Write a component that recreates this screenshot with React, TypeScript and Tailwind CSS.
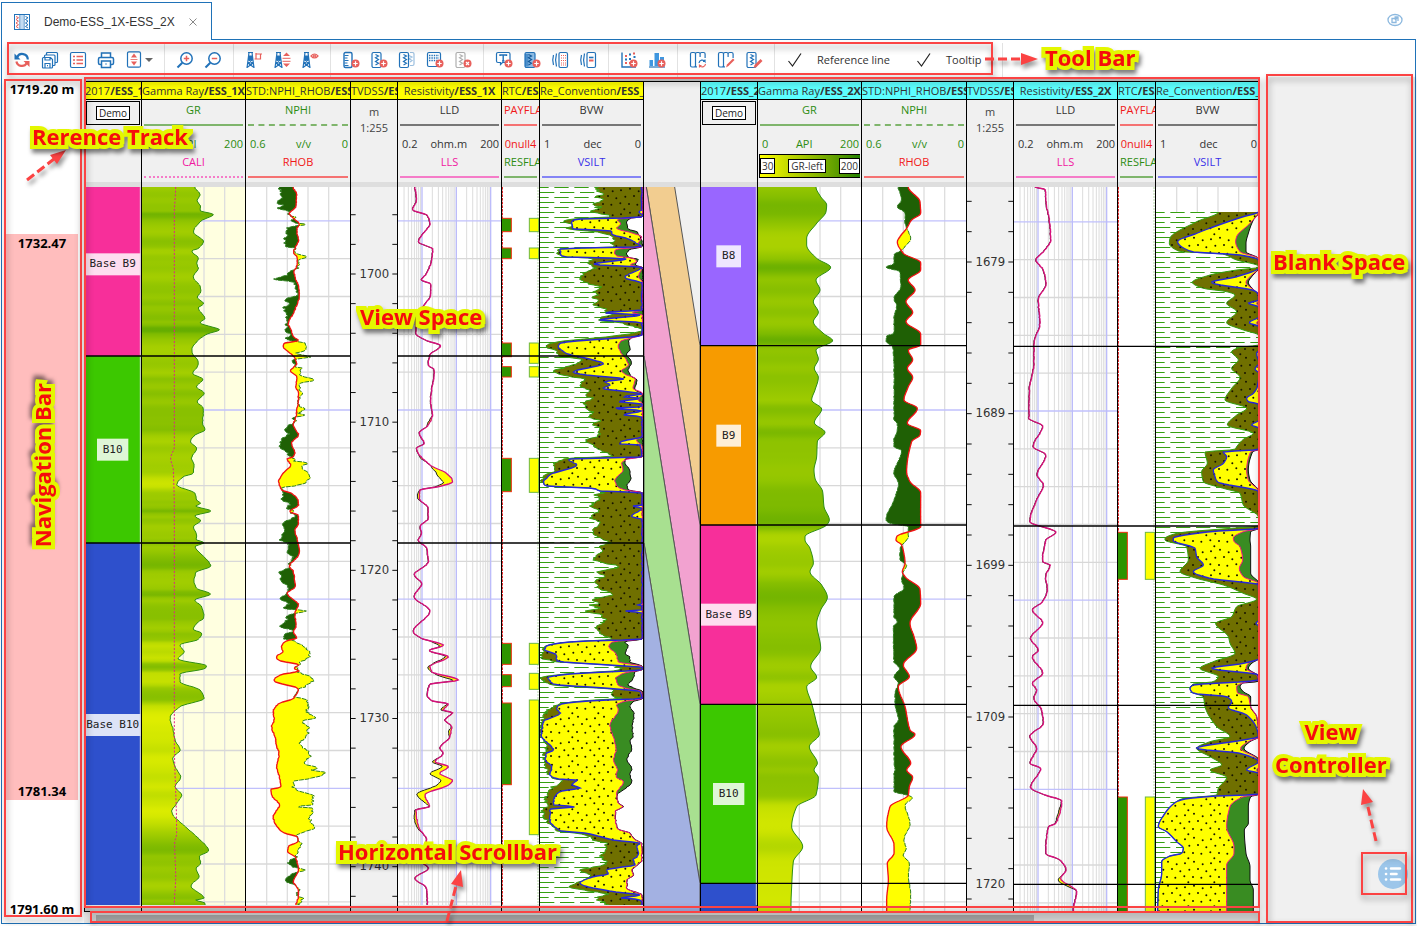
import React from "react";

/* ------------------------------------------------------------------ */
/* Curve samples: flat x, y lists on a grid of three units per pixel.  */
/* The lower half of every log is stored with its own depth origin.    */
/* ------------------------------------------------------------------ */

type Pt = [number, number];
const LOWER = 1080;
const TOP = 21;
const BASE = 2193;
const CHART_H = 724;

function curve(upper: number[], lower: number[] = []): Pt[] {
  const out: Pt[] = [];
  for (let i = 0; i < upper.length; i += 2) out.push([upper[i], upper[i + 1]]);
  for (let i = 0; i < lower.length; i += 2) out.push([lower[i], lower[i + 1] + LOWER]);
  return out.sort((a, b) => a[1] - b[1]);
}

function noise(n: number): number {
  const s = Math.sin(n * 12.9898) * 43758.5453;
  return (s - Math.floor(s)) * 2 - 1;
}

/* Monotone cubic resampling of a curve over depth. */
function resample(pts: Pt[], from: number, to: number, jitter = 0, step = 3): Pt[] {
  const n = pts.length;
  const sec: number[] = [];
  for (let i = 0; i < n - 1; i++) {
    sec.push((pts[i + 1][0] - pts[i][0]) / Math.max(1, pts[i + 1][1] - pts[i][1]));
  }
  const tan = pts.map((_, i) => {
    if (i === 0 || i === n - 1) return 0;
    const a = sec[i - 1];
    const b = sec[i];
    return a * b <= 0 ? 0 : (2 * a * b) / (a + b);
  });
  const out: Pt[] = [];
  let k = 0;
  for (let y = from; y <= to; y += step) {
    while (k < n - 2 && pts[k + 1][1] < y) k++;
    const [x0, y0] = pts[k];
    const [x1, y1] = pts[k + 1];
    const h = Math.max(1, y1 - y0);
    const t = Math.min(1, Math.max(0, (y - y0) / h));
    const t2 = t * t;
    const t3 = t2 * t;
    const x =
      (2 * t3 - 3 * t2 + 1) * x0 +
      (t3 - 2 * t2 + t) * h * tan[k] +
      (-2 * t3 + 3 * t2) * x1 +
      (t3 - t2) * h * tan[k + 1];
    out.push([x + jitter * noise(y), y]);
  }
  return out;
}

const line = (p: Pt[]) => "M" + p.map(([x, y]) => `${x.toFixed(1)} ${y.toFixed(1)}`).join("L");
const toEdge = (p: Pt[], edge: number) =>
  `${line(p)}L${edge} ${p[p.length - 1][1]}L${edge} ${p[0][1]}Z`;
const between = (a: Pt[], b: Pt[]) => `${line(a)}L${line([...b].reverse()).slice(1)}Z`;

const GR1 = curve(
  [345,21,360,45,352,62,362,80,360,92,400,103,365,122,340,155,370,185,355,205,335,213,355,235,350,250,355,265,340,290,360,320,362,335,352,352,370,370,355,385,365,400,375,415,360,428,385,438,418,449,380,463,350,485,335,510,340,525,355,545,352,560,338,580,368,598,350,620,372,640,352,665,370,685,368,730,375,750,345,765,332,785,350,805,335,835,342,855,340,880,310,890,290,915,345,940,350,960,362,970,348,978,393,993,345,1008,362,1022,340,1040,350,1065,348,1078],
  [372,8,345,20,372,50,392,78,348,97,342,125,350,145,392,162,345,180,365,200,372,232,350,250,340,268,365,280,355,298,300,315,312,335,295,357,380,378,375,385,300,402,300,425,360,450,372,475,300,500,270,535,280,570,285,600,300,630,278,655,285,680,302,712,285,740,305,765,290,790,275,815,310,855,350,890,385,932,358,950,362,970,348,985,357,1010,333,1037,372,1075,348,1080,375,1090]
);
const CALI1 = curve([287,21,283,100,283,800,272,835,280,870,283,1000], [283,600,290,880,284,910,287,1010,283,1095]);
const GR2 = curve(
  [378,21,392,50,410,75,408,95,380,130,350,175,350,195,380,235,422,262,378,300,390,330,370,365,385,397,370,425,400,460,428,482,378,510,385,537,373,565,385,592,375,630,365,660,395,687,373,728,405,757,382,785,380,830,372,870,375,895,398,935,402,980,418,1020,410,1035,345,1070],
  [345,0,360,25,370,70,360,95,395,135,412,172,392,210,380,250,392,325,362,380,380,412,350,440,365,490,380,550,388,583,358,620,382,670,372,690,385,712,378,765,320,800,305,860,338,920,310,965,305,1040,303,1095,303,1115]
);
const RHOB1 = curve(
  [640,21,650,45,648,80,628,100,640,115,657,130,650,150,655,180,645,205,640,215,652,235,650,260,642,275,645,290,655,320,658,350,650,375,640,400,625,430,635,455,640,470,655,482,612,490,610,500,640,528,650,550,632,573,650,590,648,620,655,640,655,670,650,690,648,710,640,735,655,765,635,790,645,820,640,830,622,838,632,855,610,880,596,905,605,930,635,940,655,965,655,975,630,995,655,1005,655,1030,645,1050],
  [652,0,658,40,628,80,640,95,645,140,622,160,655,195,645,220,648,260,640,275,650,295,620,302,605,320,608,335,590,350,595,360,655,375,642,385,655,393,600,405,582,422,655,447,640,475,595,492,580,515,582,540,575,560,585,590,590,620,597,640,590,680,598,710,602,742,573,747,575,765,598,795,580,830,585,850,610,878,650,890,655,903,625,920,622,935,645,950,652,970,655,990,640,1025,655,1050,655,1070,648,1095]
);
const NPHI1 = curve(
  [600,21,600,45,610,50,592,70,612,76,595,85,625,95,628,108,650,112,635,118,650,130,680,133,630,140,615,155,625,165,612,175,620,200,645,205,640,215,655,222,680,232,655,240,655,262,630,275,620,285,585,298,640,306,645,330,655,345,615,358,625,370,612,385,620,410,620,440,612,450,635,465,615,475,640,484,670,488,680,500,665,515,650,520,690,530,640,540,645,560,665,565,660,585,700,600,655,612,665,625,655,630,665,640,655,660,660,680,678,685,655,700,670,705,640,715,648,725,620,740,615,750,625,760,610,775,600,800,625,820,630,830,650,838,640,842,685,849,665,858,690,885,680,905,640,918,605,922,610,940,605,960,630,970,620,985,645,992,635,1000,650,1003,605,1035,615,1050],
  [600,0,625,10,620,35,640,50,630,65,628,80,600,95,605,125,625,145,622,160,600,175,625,190,612,205,680,213,625,225,620,240,600,260,640,272,610,285,615,297,640,302,665,315,680,325,690,350,665,365,650,385,655,395,700,417,675,440,655,450,645,470,680,480,685,500,680,515,705,532,665,545,685,560,685,580,660,610,690,645,670,670,715,685,690,690,738,697,680,718,640,722,640,740,650,750,700,768,695,795,635,800,700,803,690,835,700,865,660,880,650,890,665,915,650,930,650,950,625,965,635,980,675,990,640,1000,615,1020,640,1035,660,1045,650,1065,668,1075,655,1095]
);
const RHOB2 = curve(
  [655,21,690,65,692,100,665,120,650,145,630,170,622,185,640,220,692,248,692,270,655,300,675,330,648,365,668,397,648,425,692,462,692,495,655,510,668,540,652,565,668,592,655,620,642,660,682,685,652,730,692,752,690,765,665,785,650,875,660,905,692,938,692,1040,620,1070],
  [618,0,635,15,645,70,637,95,645,110,690,148,692,190,660,250,672,290,680,325,640,375,658,410,625,440,645,500,660,570,675,583,633,620,662,670,650,690,668,712,658,740,655,765,600,800,590,860,612,915,612,940,592,970,595,1020,590,1080,590,1115]
);
const NPHI2 = curve(
  [625,21,635,60,622,80,645,100,645,130,650,145,662,175,645,200,635,210,612,225,612,250,588,262,630,275,632,320,612,355,620,380,612,410,612,460,590,468,588,485,608,500,612,560,612,720,622,730,622,750,612,780,612,800,635,812,612,880,625,910,612,960,588,1020,600,1030,655,1040,655,1070],
  [650,0,630,25,630,60,650,75,640,95,635,120,642,145,612,170,612,230,622,245,610,260,612,365,628,385,612,410,625,430,615,460,615,490,625,540,612,560,612,670,615,690,612,700,612,755,650,765,668,773,645,795,660,850,642,900,648,925,640,945,658,970,655,1010,662,1060,660,1115]
);
const LLS1 = curve(
  [105,21,110,60,98,90,140,105,150,130,130,160,115,185,158,208,155,240,140,280,125,300,152,312,152,345,130,378,108,420,108,460,140,482,182,497,150,525,145,555,163,570,152,660,157,705,145,735,118,760,133,790,110,805,150,855,200,880,218,905,175,920,120,930,118,955,145,985,145,1015,120,1040,125,1060],
  [115,0,140,25,145,65,103,105,125,130,103,170,150,213,100,275,125,295,190,316,148,332,205,350,150,380,155,395,235,420,150,433,142,465,155,482,205,492,190,510,217,518,195,540,215,560,210,590,180,625,190,640,165,665,205,680,180,700,217,722,205,735,135,765,148,800,108,810,115,860,140,900,120,960,145,985,105,1015,140,1045,142,1090]
);
const LLS2 = curve(
  [75,21,105,28,110,80,118,120,122,180,100,215,78,240,100,270,108,310,85,360,90,430,72,490,72,550,58,630,57,715,98,738,70,800,108,825,82,885,100,915,80,960,60,1025,138,1057],
  [108,0,98,65,120,75,107,110,112,150,98,185,68,210,98,248,62,295,85,330,68,350,98,400,68,430,80,450,72,475,95,510,100,550,60,590,80,625,60,670,92,685,62,742,105,765,155,782,138,850,115,860,107,940,150,960,168,990,152,1015,200,1055,190,1110]
);

const SHALE1 = curve(
  [655,21,650,35,672,42,650,50,675,58,640,75,668,82,625,95,660,100,690,110,575,117,555,125,575,133,562,147,640,155,690,165,700,178,695,192,710,200,540,208,530,215,545,228,640,236,622,250,645,262,610,282,603,292,625,312,660,322,640,335,655,345,636,352,660,362,632,374,670,383,680,395,700,402,670,410,657,422,720,428,760,440,785,450,770,458,700,468,510,490,500,500,530,515,545,529,610,540,560,560,522,575,570,590,610,597,600,615,625,630,615,645,635,655,615,668,625,690,640,700,622,705,660,725,640,730,660,750,650,770,620,782,640,795,660,810,700,828,560,836,520,855,530,870,490,890,485,905,500,918,640,925,680,936,645,945,660,955,632,980,660,990,632,1015,660,1025,640,1050,650,1070],
  [690,8,655,20,665,35,640,60,680,70,715,80,655,95,670,110,645,125,655,145,700,162,640,180,660,190,632,195,665,205,617,213,665,225,675,240,650,262,665,285,700,297,580,305,500,318,485,345,490,355,530,365,700,376,720,385,700,392,560,402,490,410,485,418,510,432,600,442,700,446,695,465,720,475,640,480,540,492,500,515,485,545,483,590,500,612,490,660,500,690,520,715,545,722,510,748,498,780,500,795,487,815,500,840,530,872,620,885,640,900,680,910,665,950,680,970,620,985,597,990,630,1005,600,1025,567,1038,620,1052,680,1062,650,1075,680,1095]
);
const SILT1 = curve(
  [785,21,785,90,775,95,788,105,780,112,585,118,575,130,580,147,690,152,700,165,740,175,770,190,785,200,540,206,545,230,740,236,640,253,785,262,735,292,785,310,785,390,670,398,780,405,660,420,786,428,786,465,540,490,535,500,560,520,640,540,670,550,580,577,620,585,730,597,675,605,690,615,670,625,740,635,785,642,730,650,780,655,715,665,785,672,786,680,700,685,785,692,730,705,786,710,786,770,725,785,720,792,780,795,786,830,565,838,590,855,510,885,490,910,500,918,640,925,660,933,786,938,786,975,760,978,786,985,755,1010,786,1018],
  [786,0,786,190,775,195,786,198,786,210,737,213,786,218,786,297,580,305,500,318,495,330,530,345,530,362,700,376,786,382,786,388,560,403,505,412,520,432,700,446,780,455,786,475,640,482,545,492,530,505,540,520,490,545,485,590,510,615,520,630,500,640,495,660,515,680,510,705,540,718,590,720,575,735,600,743,540,755,525,770,520,795,585,800,510,808,510,840,540,872,620,880,700,900,780,910,770,920,775,945,760,960,765,975,720,982,680,990,685,1002,640,1010,600,1030,700,1055,780,1065,720,1075,780,1078,786,1095]
);
const PORO1 = curve(
  [787,21,787,110,712,118,722,130,710,145,760,160,785,170,775,190,787,200,710,208,703,215,710,228,760,235,770,245,750,255,787,262,775,290,787,305,787,390,755,398,787,405,787,465,770,470,720,485,715,500,730,528,740,540,745,555,725,573,740,585,765,595,760,625,787,640,775,660,787,670,787,770,770,780,787,800,787,830,740,838,725,850,730,870,705,900,710,918,735,930,787,938],
  [787,297,700,305,687,318,710,345,715,365,787,380,787,388,730,400,708,415,715,435,740,445,785,455,787,475,730,485,710,495,715,510,690,555,700,590,708,630,700,660,712,690,708,710,730,725,710,760,715,790,728,800,705,815,710,865,750,880,760,895,785,912,785,960,765,980,755,990,760,1005,740,1020,740,1045,785,1065,787,1095]
);
const BVW1 = curve(
  [788,21,788,110,750,115,740,130,745,148,770,155,782,175,788,200,750,208,740,220,745,232,775,238,765,255,788,262,788,465,760,470,745,485,750,505,740,525,755,545,745,570,755,590,770,600,765,630,788,642,788,830,735,838,735,850,750,870,752,900,740,915,745,930,788,938],
  [788,297,735,305,745,318,735,340,750,352,750,365,788,380,788,388,765,395,760,415,745,435,765,445,788,455,788,475,760,485,750,500,762,520,757,560,760,590,750,600,755,625,740,660,755,685,750,705,755,725,730,750,711,765,716,790,729,800,706,815,711,865,751,880,761,895,786,912,786,960,766,980,756,990,761,1005,741,1020,741,1045,786,1065,788,1095]
);
const SHALE2 = curve(
  [625,96,560,125,480,175,478,190,510,215,630,220,680,240,745,258,745,262,680,270,600,285,547,307,580,325,650,335,675,345,650,370,680,395,650,428,700,450,745,465,747,495,690,502,665,515,685,540,665,565,690,592,665,625,645,660,710,685,680,705,652,735,730,760,700,778,680,800,675,808,585,816,592,850,575,875,580,905,640,925,690,940,700,975,745,1010,747,1038,660,1045,500,1060,465,1076],
  [465,0,530,20,535,60,510,95,560,115,640,135,700,160,740,178,680,200,665,230,617,250,655,290,660,310,675,340,610,365,570,385,625,410,610,425,550,432,540,445,560,462,580,470,585,500,620,560,660,590,600,605,560,625,600,650,635,675,600,690,650,712,625,745,620,765,520,775,495,788,465,820,445,860,470,875,500,905,520,925,515,940,480,948,455,965,455,1000,445,1050,443,1115]
);
const SILT2 = curve(
  [745,96,700,110,640,130,560,160,503,185,545,215,690,225,745,240,747,262,680,290,605,307,735,333,745,345,745,360,715,370,745,380,747,410,718,428,747,440,747,510,740,520,747,550,735,567,747,580,742,620,730,640,710,655,715,665,745,672,747,720,725,735,747,745,747,808,640,816,650,830,640,850,610,870,615,890,622,905,745,935,747,1045,600,1055,490,1075],
  [490,2,555,25,560,50,580,75,550,95,600,115,700,127,745,133,747,240,738,250,747,260,747,355,700,370,605,385,745,405,745,420,700,425,550,435,540,445,550,460,650,470,665,485,655,503,710,525,740,565,745,590,700,600,560,625,690,640,745,665,710,690,747,700,747,763,620,768,520,778,495,788,465,820,445,860,470,875,500,905,520,925,515,940,480,948,455,965,455,1000,445,1050,443,1115]
);
const PORO2 = curve(
  [745,96,720,130,680,170,677,185,690,215,745,235,747,262,720,290,708,307,735,333,745,345,747,360,740,370,747,380,747,420,740,428,747,440,747,808,722,815,710,870,715,900,745,933,747,1045,700,1055,670,1074],
  [672,4,690,20,698,60,688,85,700,110,745,130,747,355,715,370,708,385,740,405,745,420,700,428,680,440,682,458,715,470,722,500,740,530,747,590,715,605,692,625,740,655,747,680,740,690,747,700,747,763,700,770,660,800,650,860,672,920,672,940,650,975,650,1115]
);
const BVW2 = curve(
  [747,96,730,120,715,160,708,190,708,215,745,235,747,262,725,290,715,307,735,333,747,345,747,808,728,815,715,870,720,900,747,935,747,1045,722,1055],
  [720,0,722,20,722,100,747,130,747,355,725,370,715,385,747,410,747,425,700,428,690,440,700,455,722,470,722,500,740,530,747,590,720,605,702,625,747,660,747,763,722,770,715,800,715,850,703,870,708,940,720,980,720,1020,730,1050,730,1115]
);

const LINES_1 = [528, 1089];
const LINES_2 = [497, 1035, 1573, 2110];
const LINES_2B = [499, 1038, 1576, 2113];
const LEFT_END = 2175;

/* ------------------------------ Charts ----------------------------- */

function Chart({ x, w, label, children }: { x: number; w: number; label: string; children: React.ReactNode }) {
  return (
    <svg
      role="img"
      aria-label={label}
      viewBox={`${x} ${TOP} ${w * 3} ${CHART_H * 3}`}
      width={w}
      height={CHART_H}
      className="block"
    >
      {children}
    </svg>
  );
}

function Grid({ x, w, shift = 0, vertical = true }: { x: number; w: number; shift?: number; vertical?: boolean }) {
  const rows = Array.from({ length: 19 }, (_, i) => i);
  return (
    <g strokeWidth={4}>
      {vertical && [1, 2, 3, 4].map((i) => (
        <path key={i} d={`M${x + 62 * i} ${TOP}V${BASE}`} stroke="#dedede" />
      ))}
      {rows.map((i) => (
        <path key={i} d={`M${x} ${122.5 + shift + 113.5 * i}h${w * 3}`} stroke={i % 5 === 0 ? "#c0c0fc" : "#d8d8d8"} />
      ))}
    </g>
  );
}

function Markers({ x, w, ys }: { x: number; w: number; ys: number[] }) {
  return <path d={ys.map((y) => `M${x} ${y}h${w * 3}`).join("")} stroke="#000" strokeWidth={4} />;
}

function Footer({ x, w }: { x: number; w: number }) {
  return (
    <g>
      <rect x={x} y={LEFT_END} width={w * 3} height={6} fill="#e8e8e8" />
      <rect x={x} y={2180} width={w * 3} height={13} fill="#c9c9c9" />
      <path d={`M${x} 2182h${w * 3}`} stroke="#000" strokeWidth={3} />
    </g>
  );
}

function GammaChart({ id, x, pts, back, caliper, marks, end }: {
  id: string; x: number; pts: Pt[]; back: string; caliper?: Pt[]; marks: number[]; end: number;
}) {
  const w = 103;
  const p = resample(pts, TOP, end, caliper ? 1 : 0);
  const stops = p.filter((_, i) => i % 3 === 0).map(([px, py]) => {
    const api = ((px - x) / 309) * 200;
    const t = Math.min(1, Math.max(0, (api - 30) / 170));
    return {
      offset: (py - TOP) / (end - TOP),
      color: `rgb(${Math.round(255 - 225 * t)},${Math.round(255 - 120 * t)},0)`,
    };
  });
  return (
    <Chart x={x} w={w} label="Gamma ray log">
      <defs>
        <linearGradient id={id} gradientUnits="userSpaceOnUse" x1="0" y1={TOP} x2="0" y2={end}>
          {stops.map((s, i) => <stop key={i} offset={s.offset} stopColor={s.color} />)}
        </linearGradient>
      </defs>
      <rect x={x} y={TOP} width={309} height={2172} fill={back} />
      <Grid x={x} w={w} />
      <path d={toEdge(p, x)} fill={`url(#${id})`} />
      <path d={line(p)} fill="none" stroke="#2f8f14" strokeWidth={3} />
      {caliper && (
        <path d={line(resample(caliper, TOP, end))} fill="none" stroke="#e0208a" strokeWidth={3} strokeDasharray="6 5" />
      )}
      {caliper && <Footer x={x} w={w} />}
      <Markers x={x} w={w} ys={marks} />
    </Chart>
  );
}

function NeutronChart({ x, red, green, jitter, marks, end, footer }: {
  x: number; red: Pt[]; green: Pt[]; jitter: number; marks: number[]; end: number; footer?: boolean;
}) {
  const w = 104;
  const r = resample(red, TOP, end, jitter / 4);
  const g = resample(green, TOP, end, jitter);
  const low = g.map(([gx, y], i): Pt => [Math.min(gx, r[i][0]), y]);
  const high = g.map(([gx, y], i): Pt => [Math.max(gx, r[i][0]), y]);
  return (
    <Chart x={x} w={w} label="Neutron density log">
      <rect x={x} y={TOP} width={312} height={2172} fill="#fff" />
      <Grid x={x} w={w} />
      <path d={between(low, r)} fill="#1f6005" />
      <path d={between(high, r)} fill="#ffff00" />
      <path d={line(g)} fill="none" stroke="#2f8020" strokeWidth={3} strokeDasharray="14 3" />
      <path d={line(r)} fill="none" stroke="#f01414" strokeWidth={4} />
      {footer && <Footer x={x} w={w} />}
      <Markers x={x} w={w} ys={marks} />
    </Chart>
  );
}

function DepthChart({ x, first, y0, perMeter, labels, footer }: {
  x: number; first: number; y0: number; perMeter: number; labels: number[]; footer?: boolean;
}) {
  const ticks = Array.from({ length: 26 }, (_, i) => y0 + (i - 3) * 2 * perMeter).filter((y) => y > TOP && y < LEFT_END);
  return (
    <Chart x={x} w={46} label="True vertical depth">
      <rect x={x} y={TOP} width={138} height={2172} fill="#f0f0f0" />
      <path d={ticks.map((y) => `M${x} ${y}h14M${x + 124} ${y}h14`).join("")} stroke="#111" strokeWidth={3} />
      {labels.map((d) => (
        <text
          key={d}
          x={x + 70}
          y={y0 + (d - first) * perMeter + 11}
          textAnchor="middle"
          fontSize={35}
          fill="#333"
          className="font-['DejaVu_Sans',sans-serif]"
        >
          {d}
        </text>
      ))}
      {footer && <Footer x={x} w={46} />}
    </Chart>
  );
}

const BUMPS: number[][] = [
  [858, 925, 34], [710, 740, 4], [825, 845, 4], [930, 965, 5], [1383, 1402, 14], [1418, 1455, 9], [1455, 1475, 6],
  [1480, 1506, 24], [1570, 1598, 7], [1640, 1670, 6], [1735, 1880, 34], [1880, 1960, 6],
];

function ResistivityChart({ x, pts, shift, marks, bumps, end, footer }: {
  x: number; pts: Pt[]; shift: number; marks: number[]; bumps: number[][]; end: number; footer?: boolean;
}) {
  const w = 103;
  const m = resample(pts, TOP, end, 1);
  const k = m.map(([px, y]): Pt => {
    const b = bumps.find(([a, c]) => y >= a && y <= c);
    return [px - 1 - (b ? b[2] * Math.sin((Math.PI * (y - b[0])) / (b[1] - b[0])) : 0), y];
  });
  const grays: number[] = [];
  [0.1, 1, 10, 100].forEach((d) =>
    [2, 3, 4, 5, 6, 7, 8, 9].forEach((n) => {
      const v = d * n;
      if (v > 0.2 && v < 200) grays.push(x + 103 * Math.log10(v / 0.2));
    })
  );
  return (
    <Chart x={x} w={w} label="Resistivity log">
      <rect x={x} y={TOP} width={309} height={2172} fill="#fff" />
      <path d={grays.map((g) => `M${g} ${TOP}V${BASE}`).join("")} stroke="#dcdcdc" strokeWidth={3} />
      <Grid x={x} w={w} shift={shift} vertical={false} />
      <path d={[1, 10, 100].map((v) => `M${x + 103 * Math.log10(v / 0.2)} ${TOP}V${BASE}`).join("")} stroke="#bcbcfa" strokeWidth={4} />
      <path d={between(k, m)} fill="#ffff00" />
      <path d={line(k)} fill="none" stroke="#222" strokeWidth={3} />
      <path d={line(m)} fill="none" stroke="#d8107c" strokeWidth={4} />
      {footer && <Footer x={x} w={w} />}
      <Markers x={x} w={w} ys={marks} />
    </Chart>
  );
}

function FlagChart({ x, pay, res, marks, footer }: {
  x: number; pay: number[][]; res: number[][]; marks: number[]; footer?: boolean;
}) {
  return (
    <Chart x={x} w={37} label="Pay and reservoir flags">
      <rect x={x} y={TOP} width={111} height={2172} fill="#fff" />
      <path d={`M${x + 1} ${TOP}V${BASE}`} stroke="#e00000" strokeWidth={3} strokeDasharray="8 3" />
      <path d={`M${x + 108} ${TOP}V${BASE}`} stroke="#b8d8a8" strokeWidth={3} strokeDasharray="6 3" />
      {pay.map(([a, b]) => (
        <rect key={a} x={x - 2} y={a} width={30} height={b - a} fill="#2d9400" stroke="#f03010" strokeWidth={3} />
      ))}
      {res.map(([a, b]) => (
        <rect key={a} x={x + 82} y={a} width={28} height={b - a} fill="#ffff00" stroke="#6fb840" strokeWidth={3} />
      ))}
      {footer && <Footer x={x} w={37} />}
      <Markers x={x} w={37} ys={marks} />
    </Chart>
  );
}

function VolumeChart({ id, x, from, end, shale, silt, poro, bvw, jitter, marks, footer }: {
  id: string; x: number; from: number; end: number; shale: Pt[]; silt: Pt[]; poro: Pt[]; bvw: Pt[];
  jitter: number; marks: number[]; footer?: boolean;
}) {
  const w = 103;
  const edge = x + 309;
  const b = resample(silt, from, end, jitter / 4);
  const a = resample(shale, from, end, jitter).map(([px, y], i): Pt => [Math.min(px, b[i][0]), y]);
  const c = resample(poro, from, end, jitter / 5);
  const d = resample(bvw, from, end, jitter / 4);
  return (
    <Chart x={x} w={w} label="Lithology volumes">
      <defs>
        <pattern id={`${id}-clay`} patternUnits="userSpaceOnUse" x={x} y={from} width={60} height={30}>
          <rect width={60} height={30} fill="#fff" />
          <path d="M0 16.5h43M0 1.5h26M43 1.5h17" stroke="#35a010" strokeWidth={3} />
        </pattern>
        <pattern id={`${id}-dots`} patternUnits="userSpaceOnUse" x={x} y={from} width={78} height={72}>
          <g fill="#161400">
            <circle cx={9} cy={10} r={3} /><circle cx={36} cy={5} r={3} /><circle cx={62} cy={13} r={3} />
            <circle cx={22} cy={29} r={3} /><circle cx={48} cy={27} r={3} /><circle cx={73} cy={34} r={3} />
            <circle cx={7} cy={49} r={3} /><circle cx={33} cy={51} r={3} /><circle cx={58} cy={53} r={3} />
            <circle cx={19} cy={67} r={3} />
          </g>
        </pattern>
      </defs>
      <rect x={x} y={TOP} width={309} height={2172} fill="#fff" />
      <Grid x={x} w={w} />
      <rect x={x} y={from} width={309} height={end - from} fill={`url(#${id}-clay)`} />
      <path d={toEdge(a, edge)} fill="#707000" />
      <path d={toEdge(b, edge)} fill="#ffff00" />
      <path d={toEdge(a, edge)} fill={`url(#${id}-dots)`} />
      <path d={toEdge(c, edge)} fill="#398c22" />
      <path d={toEdge(d, edge)} fill="#fff" />
      <g fill="none" strokeWidth={3}>
        <path d={line(a)} stroke="#35a010" />
        <path d={line(d)} stroke="#111" />
        <path d={line(c)} stroke="#f01888" />
        <path d={line(b)} stroke="#2626d8" strokeWidth={4} />
      </g>
      {footer && <Footer x={x} w={w} />}
      <Markers x={x} w={w} ys={marks} />
    </Chart>
  );
}

interface Zone { name: string; from: number; to: number; color: string; labelY?: number }

const ZONES_1: Zone[] = [
  { name: "Base B9", from: 21, to: 528, color: "#f72f9a", labelY: 253 },
  { name: "B10", from: 528, to: 1089, color: "#3cc800", labelY: 809 },
  { name: "Base B10", from: 1089, to: 2180, color: "#2e50cc", labelY: 1635 },
];
const ZONES_2: Zone[] = [
  { name: "B8", from: 21, to: 497, color: "#9966ff", labelY: 229 },
  { name: "B9", from: 497, to: 1035, color: "#f79b00", labelY: 767 },
  { name: "Base B9", from: 1035, to: 1573, color: "#f72f9a", labelY: 1304 },
  { name: "B10", from: 1573, to: 2110, color: "#3cc800", labelY: 1842 },
  { name: "", from: 2110, to: 2193, color: "#2e50cc" },
];

function ZoneChart({ x, zones, marks, footer }: { x: number; zones: Zone[]; marks: number[]; footer?: boolean }) {
  return (
    <Chart x={x} w={56} label="Zones">
      {zones.map((z) => {
        const half = Math.min(84, z.name.length * 10 + 17);
        return (
          <g key={z.from}>
            <rect x={x} y={z.from} width={168} height={z.to - z.from} fill={z.color} />
            {z.labelY && (
              <>
                <rect x={x + 83 - half} y={z.labelY - 33} width={half * 2} height={66} fill="#fff" fillOpacity={0.84} />
                <text
                  x={x + 83}
                  y={z.labelY + 9}
                  textAnchor="middle"
                  fontSize={33}
                  fill="#222"
                  className="font-['DejaVu_Sans_Mono',monospace]"
                >
                  {z.name}
                </text>
              </>
            )}
          </g>
        );
      })}
      {footer && <Footer x={x} w={56} />}
      <path d={`M${x + 166} ${TOP}V${LEFT_END}`} stroke="#d8d8d8" strokeWidth={3} />
      <Markers x={x} w={56} ys={marks} />
    </Chart>
  );
}

function CorrelationChart() {
  const l = 792;
  const r = 960;
  return (
    <Chart x={l} w={56} label="Zone correlation">
      <rect x={l} y={TOP} width={168} height={2172} fill="#f0f0f0" />
      <g stroke="#555" strokeWidth={3}>
        <path d={`M${l + 6} 15L883 15L${r} 497V1035Z`} fill="#f2cd90" />
        <path d={`M${l - 4} 0L${l + 6} 15L${r} 1035V1573L${l} 528Z`} fill="#f2a2d0" />
        <path d={`M${l} 528L${r} 1573V2110L${l} 1089Z`} fill="#a8e090" />
        <path d={`M${l} 1089L${r} 2110V2200H${l}Z`} fill="#a3b1e2" />
      </g>
    </Chart>
  );
}

/* -------------------------- Track headers -------------------------- */

function Scale({ name, color, rule, left, unit, right, clip }: {
  name: string; color: string; rule: string; left?: string; unit?: string; right?: string; clip?: boolean;
}) {
  return (
    <div className={color}>
      <div className={`overflow-hidden whitespace-nowrap leading-4 ${clip ? "pl-0.5" : "text-center"}`}>{name}</div>
      <div className={`mx-0.5 mt-1.5 border-t-2 ${rule}`} />
      {unit !== undefined && (
        <div className={`mt-2.5 mb-0.5 flex leading-4 ${clip ? "justify-center px-0" : "justify-between pr-0.5 pl-1"}`}>
          <span>{left}</span>
          <span>{unit}</span>
          <span>{right}</span>
        </div>
      )}
    </div>
  );
}

function ColorScale() {
  return (
    <div className="mx-px flex h-6 items-center justify-between border border-r-0 border-black bg-linear-to-r from-[#ffff00] to-[#1e8000] text-[10px] text-[#333]">
      <span className="border border-black bg-white px-px leading-[14px]">30</span>
      <span className="border border-black bg-white px-0.5 leading-3">GR-left</span>
      <span className="border border-black bg-white px-px leading-[14px]">200</span>
    </div>
  );
}

const green = "text-[#2c8c10]";
const greenRule = "border-[#7fb56c]";
const redText = "text-[#f01818]";
const redRule = "border-[#f57272]";

function Track({ width, title, well, cyan, header, children }: {
  width: string; title: string; well: string; cyan?: boolean; header: React.ReactNode; children: React.ReactNode;
}) {
  return (
    <section className={`${width} shrink-0 border-l border-black`}>
      <h2
        className={`h-[18px] overflow-hidden border-b border-black text-center text-[11px] leading-[17px] font-normal whitespace-nowrap text-[#333] ${cyan ? "bg-[#5cffff]" : "bg-[#ffff00]"}`}
      >
        {title}<b>/{well}</b>
      </h2>
      <div className="h-[82px] overflow-hidden bg-[#f0f0f0] pt-0.5 text-[11px]">{header}</div>
      <div className="h-[5px] bg-[#dedede]" />
      {children}
    </section>
  );
}

const demoHeader = (
  <div className="mx-px -mt-px flex h-6 items-center justify-center border border-black">
    <span className="border border-black bg-white px-0.5 text-[10px] leading-3 text-[#222]">Demo</span>
  </div>
);
const depthHeader = (
  <div className="pt-0.5 text-center leading-4 text-[#444]">
    m<br />1:255
  </div>
);
const neutronHeader = (
  <>
    <Scale name="NPHI" color={green} rule={`border-dashed ${greenRule}`} left="0.6" unit="v/v" right="0" />
    <Scale name="RHOB" color={redText} rule={redRule} />
  </>
);
const resHeader = (
  <>
    <Scale name="LLD" color="text-[#333]" rule="border-[#777]" left="0.2" unit="ohm.m" right="200" />
    <Scale name="LLS" color="text-[#f018a0]" rule="border-[#f57cc8]" />
  </>
);
const flagHeader = (
  <>
    <Scale clip name="PAYFLAG" color={redText} rule={redRule} left="0" unit="null" right="4" />
    <Scale clip name="RESFLAG" color={green} rule={greenRule} />
  </>
);
const volumeHeader = (
  <>
    <Scale name="BVW" color="text-[#333]" rule="border-[#777]" left="1" unit="dec" right="0" />
    <Scale name="VSILT" color="text-[#3a30e8]" rule="border-[#8484f5]" />
  </>
);

function Tracks() {
  return (
    <div className="flex border-t border-b border-black">
      <Track width="w-[57px]" title="2017" well="ESS_1X" header={demoHeader}>
        <ZoneChart x={15} zones={ZONES_1} marks={LINES_1} footer />
      </Track>
      <Track
        width="w-[104px]" title="Gamma Ray" well="ESS_1X"
        header={
          <>
            <Scale name="GR" color={green} rule={greenRule} left="0" unit="API" right="200" />
            <Scale name="CALI" color="text-[#f018a0]" rule="border-dotted border-[#f57cc8]" />
          </>
        }
      >
        <GammaChart id="gamma-1" x={186} pts={GR1} caliper={CALI1} back="#ffffe0" marks={LINES_1} end={LEFT_END} />
      </Track>
      <Track width="w-[105px]" title="STD:NPHI_RHOB" well="ESS_1X" header={neutronHeader}>
        <NeutronChart x={498} red={RHOB1} green={NPHI1} jitter={5} marks={LINES_1} end={LEFT_END} footer />
      </Track>
      <Track width="w-[47px]" title="TVDSS" well="ESS_1X" header={depthHeader}>
        <DepthChart x={813} first={1700} y0={282} perMeter={44.45} labels={[1700, 1710, 1720, 1730, 1740]} footer />
      </Track>
      <Track width="w-[104px]" title="Resistivity" well="ESS_1X" header={resHeader}>
        <ResistivityChart x={54} pts={LLS1} shift={0} marks={LINES_1} bumps={BUMPS} end={LEFT_END} footer />
      </Track>
      <Track width="w-[38px]" title="RTC" well="ESS_1X" header={flagHeader}>
        <FlagChart
          x={366}
          pay={[[115, 155], [204, 236], [489, 530], [560, 591], [835, 935], [1390, 1453], [1484, 1520], [1569, 1814]]}
          res={[[115, 155], [204, 236], [489, 550], [560, 591], [835, 937], [1390, 1453], [1480, 1528], [1560, 1964]]}
          marks={LINES_1}
          footer
        />
      </Track>
      <Track width="w-[104px]" title="Re_Convention" well="ESS_1X" header={volumeHeader}>
        <VolumeChart
          id="volume-1" x={480} from={TOP} end={LEFT_END} shale={SHALE1} silt={SILT1} poro={PORO1} bvw={BVW1}
          jitter={7} marks={LINES_1} footer
        />
      </Track>
      <div className="w-[57px] shrink-0 border-l border-black bg-[#f0f0f0]">
        <div className="h-[100px]" />
        <div className="h-[5px] bg-[#dedede]" />
        <CorrelationChart />
      </div>
      <Track cyan width="w-[57px]" title="2017" well="ESS_2X" header={demoHeader}>
        <ZoneChart x={33} zones={ZONES_2} marks={LINES_2} />
      </Track>
      <Track
        cyan width="w-[104px]" title="Gamma Ray" well="ESS_2X"
        header={
          <>
            <Scale name="GR" color={green} rule={greenRule} left="0" unit="API" right="200" />
            <ColorScale />
          </>
        }
      >
        <GammaChart id="gamma-2" x={204} pts={GR2} back="#fff" marks={LINES_2} end={BASE} />
      </Track>
      <Track cyan width="w-[105px]" title="STD:NPHI_RHOB" well="ESS_2X" header={neutronHeader}>
        <NeutronChart x={516} red={RHOB2} green={NPHI2} jitter={1} marks={LINES_2} end={BASE} />
      </Track>
      <Track cyan width="w-[47px]" title="TVDSS" well="ESS_2X" header={depthHeader}>
        <DepthChart x={831} first={1679} y0={246} perMeter={45.5} labels={[1679, 1689, 1699, 1709, 1720]} />
      </Track>
      <Track cyan width="w-[104px]" title="Resistivity" well="ESS_2X" header={resHeader}>
        <ResistivityChart x={12} pts={LLS2} shift={3} marks={LINES_2B} bumps={[[1865, 1935, 4], [2090, 2130, 12]]} end={BASE} />
      </Track>
      <Track cyan width="w-[38px]" title="RTC" well="ESS_2X" header={flagHeader}>
        <FlagChart x={324} pay={[[1057, 1198], [1851, 2200]]} res={[[1057, 1198], [1851, 2200]]} marks={LINES_2B} />
      </Track>
      <Track cyan width="w-[104px]" title="Re_Convention" well="ESS_2X" header={volumeHeader}>
        <VolumeChart
          id="volume-2" x={438} from={96} end={BASE} shale={SHALE2} silt={SILT2} poro={PORO2} bvw={BVW2}
          jitter={0} marks={LINES_2B}
        />
      </Track>
    </div>
  );
}

/* ------------------------------ Icons ------------------------------ */

const B = "#2272b9";
const R = "#e8605c";

function Icon({ children }: { children: React.ReactNode }) {
  return (
    <svg viewBox="0 0 18 18" width={18} height={18} fill="none" stroke={B} strokeWidth={1.2} aria-hidden="true">
      {children}
    </svg>
  );
}
const plus = (
  <g>
    <circle cx={13.5} cy={12.5} r={4} fill={R} stroke="none" />
    <path d="M13.5 10.3v4.4M11.3 12.5h4.4" stroke="#fff" />
  </g>
);
const wave = "M5.5 3.5l3 1.5-3 1.8 3 1.8-3 1.8 3 1.8-3 1.8";
const tower = "M3 1.5h5M4 1.5L2 17M7 1.5L9 17M3.6 5h3.8M3.2 8.5h4.6M2.8 12h5.4M3.6 5l4.2 3.5M7.4 5L3.2 8.5M3.2 8.5l5 3.5M7.8 8.5l-5 3.5M2.8 12L9 16.5M8.2 12L2 16.5";
const tubes = "M1.5 3q0-1.500 1.500-1.500h2Q6.500 1.500 6.500 3v11.500q0 1.500-1.500 1.500H3q-1.500 0-1.500-1.500zM6.500 3q0-1.500 1.500-1.500h1.600q1.500 0 1.500 1.500M6.500 3v11.500q0 1.500 1.500 1.500M11.100 6V3q0-1.500 1.500-1.500h2q1.500 0 1.500 1.500v4";

const ICONS: Record<string, React.ReactNode> = {
  refresh: (
    <Icon>
      <g strokeWidth={2.2}>
        <path d="M4 6.500A5.600 5.600 0 0 1 14.800 8.500" /><path d="M13.800 12A5.600 5.600 0 0 1 3.400 10.500" stroke={R} />
      </g>
      <path d="M1.500 2.500v6h6z" fill={B} stroke="none" /><path d="M16.500 16v-6h-6z" fill={R} stroke="none" />
    </Icon>
  ),
  save: (
    <Icon>
      <path d="M5.500 3.500V2.500q0-1 1-1h9q1 0 1 1v8q0 1-1 1h-1M3.500 6V5q0-1 1-1h8.500q1 0 1 1v8.500q0 1-1 1h-1" />
      <path d="M1.500 7.500q0-1 1-1h7l2 2V16q0 1-1 1H2.500q-1 0-1-1zM4 6.700V9h5V6.700M4 17v-4.500h5V17M6 14.700h1" />
    </Icon>
  ),
  list: (
    <Icon>
      <rect x={1.5} y={1.5} width={15} height={15} rx={1.5} />
      <path d="M4 5.500h2M4 9h2M4 12.500h2M7.500 5.500H14M7.500 9H14M7.500 12.500H14" stroke={R} strokeWidth={1.500} />
    </Icon>
  ),
  print: (
    <Icon>
      <path d="M4.500 6V2h9V6M4.500 13.500H3q-1.500 0-1.500-1.500V8Q1.500 6.500 3 6.500h12q1.500 0 1.500 1.500v4q0 1.500-1.500 1.500h-1.500M4.500 10h9v6.500h-9zM8.500 13h1" strokeWidth={1.500} />
    </Icon>
  ),
  fit: (
    <Icon>
      <rect x={2.5} y={0.8} width={13} height={15.400} rx={1.5} />
      <path d="M9 2.500l3 4H6zM9 14.500l3-4H6z" fill={R} stroke="none" /><path d="M5.500 8.500h7" stroke={R} strokeWidth={.8} />
    </Icon>
  ),
  zoomIn: (
    <Icon>
      <circle cx={10.5} cy={7.5} r={5.700} strokeWidth={1.500} /><path d="M6.300 11.700L1.500 16.500" strokeWidth={2} />
      <path d="M10.500 4.800v5.400M7.800 7.500h5.400" stroke={R} strokeWidth={1.500} />
    </Icon>
  ),
  zoomOut: (
    <Icon>
      <circle cx={10.5} cy={7.5} r={5.700} strokeWidth={1.500} /><path d="M6.300 11.700L1.500 16.500" strokeWidth={2} />
      <path d="M7.800 7.500h5.400" stroke={R} strokeWidth={1.500} />
    </Icon>
  ),
  wellCrop: <Icon><path d={tower} /><path d="M11 2v6.500M9.500 8h6M15.500 8.500V2.500M11 3h6" stroke={R} /></Icon>,
  wellShift: <Icon><path d={tower} /><path d="M13.500 1.500l3.500 3.500h-7zM13.500 16l3.500-3.500h-7z" fill={R} stroke="none" /><path d="M9.500 7.300h8M9.500 10.300h8" stroke={R} strokeWidth={1} /></Icon>,
  wellView: <Icon><path d={tower} /><path d="M10 5q3.500-4 7 0-3.500 4-7 0z" stroke={R} /><circle cx={13.5} cy={5} r={1} stroke={R} /></Icon>,
  addScale: <Icon><rect x={2} y={1.5} width={8} height={15} rx={1.500} strokeWidth={1.400} /><path d="M2.500 4.500h4M2.500 7h3M2.500 9.500h4M2.500 12h3M2.500 14.500h4" />{plus}</Icon>,
  addTrack: <Icon><rect x={2} y={1.5} width={9} height={15} rx={1.5} /><path d={wave} />{plus}</Icon>,
  copyTrack: <Icon><rect x={1.5} y={1.5} width={9} height={15} rx={1.5} /><path d={wave} /><g opacity={.45}><path d="M12 1.500h2.500q1.500 0 1.500 1.500v10q0 1.500-1.500 1.500H12M11 4.500l3 1.500-3 1.800 3 1.800-2 1.500" /></g></Icon>,
  addGrid: <Icon><rect x={1.500} y={1.500} width={13} height={14} rx={1.500} /><path d="M3 4.500h10M3 7h10M3 9.500h10" strokeDasharray="1.400 1" strokeWidth={1.600} />{plus}</Icon>,
  removeTrack: (
    <Icon>
      <g stroke="#b0b0b0"><rect x={2} y={1.5} width={9} height={15} rx={1.5} /><path d={wave} /></g>
      <circle cx={13.500} cy={12.500} r={4} fill={R} stroke="none" /><path d="M12 11l3 3M15 11l-3 3" stroke="#fff" />
    </Icon>
  ),
  addText: <Icon><path d="M10 11.500H7.500l-2 2v-2H3q-1.500 0-1.500-1.500V3q0-1.500 1.500-1.500h10.500Q15 1.500 15 3v6" /><path d="M5 5V4h6.500v1M8.200 4v6M7 10h2.500" strokeWidth={1.400} />{plus}</Icon>,
  addFill: <Icon><rect x={2} y={1.5} width={10} height={15} rx={1.5} fill="#8fbce4" /><path d="M2 3h3.500v12.500H2z" fill={B} stroke="none" opacity={.6} /><path d={wave} stroke="#125a9c" />{plus}</Icon>,
  trackDots: <Icon><path d="M2.500 4q-1.500 5 0 10M5.500 2.500q-1.800 6.500 0 13" /><rect x={8} y={1.500} width={8.500} height={15} rx={1.500} /><path d="M10 4.500h5M10 7h5M10 9.500h5M10 12h5M10 14h5" stroke={R} strokeDasharray="1 1" /></Icon>,
  trackBars: <Icon><path d="M2.500 4q-1.500 5 0 10M5.500 2.500q-1.800 6.500 0 13" /><rect x={8} y={1.500} width={8.500} height={15} rx={1.500} /><path d="M10 6.500h4.500" stroke={B} strokeWidth={1.600} /><path d="M10 9.500h4.500" stroke={R} strokeWidth={2} /></Icon>,
  addScatter: (
    <Icon>
      <path d="M2 1.500V16h14" strokeWidth={1.400} /><path d="M5 8.500h2M9 3.500h2M13.500 6h2M9 8h2" strokeWidth={2} />
      <path d="M5 5h2M5 12h2M13 2.500h2M9 12h1" stroke={R} strokeWidth={2} />{plus}
    </Icon>
  ),
  addHistogram: <Icon><path d="M1.500 9H5v6H1.500zM6.500 2H11v13H6.500zM12 6h4v9h-4z" fill="#3f97e0" stroke="none" /><path d="M1 16h16" />{plus}</Icon>,
  tubesSync: <Icon><path d={tubes} /><path d="M10 12a3.300 3.300 0 0 1 6-1.500V8.500M16 10.500h-2" /><path d="M16.500 13a3.300 3.300 0 0 1-6 1.500v2M10.500 14.500h2" stroke={R} /></Icon>,
  tubesEdit: <Icon><path d={tubes} /><path d="M9 16.500l1-3 6-6 1.500 1.500-6 6z" fill={R} stroke="none" /></Icon>,
  trackEdit: <Icon><rect x={2} y={1.5} width={9} height={15} rx={1.5} /><path d={wave} /><path d="M8.500 17l1-3 6-6L17.500 10l-6 6z" fill={R} stroke="none" /></Icon>,
};

const GROUPS: [string, string][][] = [
  [["zoomIn", "Zoom in"], ["zoomOut", "Zoom out"]],
  [["wellCrop", "Crop well"], ["wellShift", "Shift well"], ["wellView", "Show well"]],
  [["addScale", "Add scale track"], ["addTrack", "Add curve track"], ["copyTrack", "Copy track"], ["addGrid", "Add image track"], ["removeTrack", "Remove track"]],
  [["addText", "Add text"], ["addFill", "Add fill"], ["trackDots", "Track pattern"], ["trackBars", "Track layout"]],
  [["addScatter", "Add crossplot"], ["addHistogram", "Add histogram"]],
  [["tubesSync", "Sync template"], ["tubesEdit", "Edit template"], ["trackEdit", "Edit track"]],
];

function ToolButton({ name, label }: { name: string; label: string }) {
  return (
    <button type="button" aria-label={label} className="flex h-5 w-5 items-center justify-center">
      {ICONS[name]}
    </button>
  );
}

function Toggle({ label }: { label: string }) {
  return (
    <label className="flex items-center gap-3 text-[11px] text-[#333]">
      <span className="grid">
        <input type="checkbox" defaultChecked className="peer col-start-1 row-start-1 h-5 w-5 appearance-none" />
        <svg viewBox="0 0 20 20" className="pointer-events-none invisible col-start-1 row-start-1 h-5 w-5 peer-checked:visible" fill="none" stroke="#222" strokeWidth={1.200}>
          <path d="M3.500 11l4 5L16 3.500" />
        </svg>
      </span>
      {label}
    </label>
  );
}

const group = "flex h-full items-center gap-2 border-r border-[#e2e2e2] px-2.5";

function Toolbar() {
  return (
    <div role="toolbar" aria-label="Tool bar" className="relative flex h-[37px] items-center pt-[3px]">
      <div className={group}>
        <ToolButton name="refresh" label="Refresh" />
        <ToolButton name="save" label="Save" />
        <ToolButton name="list" label="List" />
        <ToolButton name="print" label="Print" />
        <button type="button" aria-label="Fit height" className="flex items-center">
          <span className="flex h-5 w-5 items-center justify-center">{ICONS.fit}</span>
          <svg viewBox="0 0 10 6" width={10} height={6} aria-hidden="true"><path d="M1 1h8L5 5z" fill="#666" /></svg>
        </button>
      </div>
      {GROUPS.map((g) => (
        <div key={g[0][0]} className={group}>
          {g.map(([name, label]) => <ToolButton key={name} name={name} label={label} />)}
        </div>
      ))}
      <div className="flex h-full items-center gap-6 border-r border-[#e2e2e2] pr-5 pl-2.5">
        <Toggle label="Reference line" />
        <Toggle label="Tooltip" />
      </div>
      <Frame place="left-[5px] w-[986px] top-[2px] bottom-[2px]" />
    </div>
  );
}

/* --------------------------- Annotations --------------------------- */

function Frame({ place }: { place: string }) {
  return (
    <div
      aria-hidden="true"
      className={`pointer-events-none absolute border-2 border-[#fb4343] drop-shadow-[1px_4px_3px_rgba(0,0,0,0.4)] ${place}`}
    />
  );
}

function Note({ place, children }: { place: string; children: React.ReactNode }) {
  return (
    <div
      className={`pointer-events-none absolute text-[22px] leading-[33px] font-bold whitespace-nowrap text-[#f60c0c] drop-shadow-[2px_4px_2px_rgba(0,0,0,0.5)] [-webkit-text-stroke:8px_#e4f700] [paint-order:stroke_fill] ${place}`}
    >
      {children}
    </div>
  );
}

function Arrows() {
  const lines = ["M985 59H1022", "M27 180L54 159", "M447 921L456 886", "M1376 841L1367 803"];
  const heads = ["M1038 59l-17-6v12z", "M66 150l-9 14-7-9z", "M461 870l2 17-12-3z", "M1363 789l10 13-12 3z"];
  return (
    <svg aria-hidden="true" width={1417} height={926} className="pointer-events-none absolute top-0 left-0 drop-shadow-[2px_4px_2px_rgba(0,0,0,0.4)]">
      <path d={lines.join("")} stroke="#fb4343" strokeWidth={3} strokeDasharray="9 4" fill="none" />
      <path d={heads.join("")} fill="#fb4343" />
    </svg>
  );
}

/* ------------------------------- Page ------------------------------ */

function Navigator() {
  return (
    <nav aria-label="Depth range" className="relative flex w-[82px] shrink-0 flex-col pt-0.5 pr-1.5 pb-1.5 pl-1 text-center text-[13px] leading-4 font-bold text-black">
      <div className="flex-[155_1_0%]">
        <span className="block pt-0.5">1719.20 m</span>
      </div>
      <div className="flex flex-[566_1_0%] flex-col justify-between bg-[#ffbdbd] py-px">
        <span>1732.47</span>
        <span>1781.34</span>
      </div>
      <div className="flex flex-[117_1_0%] items-end justify-center">1791.60 m</div>
      <Frame place="top-0.5 right-0.5 bottom-1.5 left-0.5" />
    </nav>
  );
}

export default function App() {
  return (
    <div className="relative flex min-h-screen flex-col overflow-hidden bg-white font-['Open_Sans',sans-serif]">
      <header className="flex h-[39px] items-end justify-between pl-px">
        <div role="tab" aria-selected="true" className="relative z-10 -mb-px flex h-[38px] items-center border border-b-0 border-[#1f72b8] bg-white pr-3 pl-3 font-['Liberation_Sans',Arial,sans-serif] text-[12px] text-[#333]">
          <svg viewBox="0 0 16 16" width={16} height={16} fill="none" stroke={B} aria-hidden="true">
            <rect x={0.5} y={0.5} width={15} height={15} /><path d="M6 .500V15.500M10 .500V15.500" />
            <path d="M6.500 1h3v14h-3z" fill="#c4dcf2" stroke="none" />
            <path d="M2 2.500l2.500 1.200L2 5.500l2.500 1.700L2 9l2.500 1.700L2 12.500 4.500 14" stroke={R} />
            <path d="M11.500 2.500L14 3.700l-2.500 1.800L14 7.200 11.500 9l2.500 1.700-2.500 1.800L14 14" />
          </svg>
          <span className="mr-3 ml-3.5">Demo-ESS_1X-ESS_2X</span>
          <button type="button" aria-label="Close tab" className="flex h-3 w-3 items-center justify-center">
            <svg viewBox="0 0 8 8" width={8} height={8} stroke="#888"><path d="M.500.500l7 7M7.500.500l-7 7" /></svg>
          </button>
        </div>
        <button type="button" aria-label="Link views" className="mr-3.5 mb-[11px] flex h-4 w-4 items-center justify-center">
          <svg viewBox="0 0 16 16" width={16} height={16} fill="none" stroke="#8db9df" strokeWidth={1.300}>
            <ellipse cx={8} cy={8} rx={7} ry={5.500} />
            <path d="M5 6.500h4v4H5zM7.500 5H11v4M8 8l3-3" />
          </svg>
        </button>
      </header>

      <div className="mx-px mb-0.5 flex grow flex-col border border-[#1f72b8]">
        <Toolbar />
        <main className="flex grow">
          <Navigator />
          <div className="relative flex w-[1176px] shrink-0 flex-col bg-[#e4e4e4]">
            <div className="bg-[#bfbfbf] pt-1">
              <Tracks />
            </div>
            <div className="mt-px ml-1.5 grow bg-[#dadada] px-1.5 pt-0.5">
              <div className="h-1.5 w-[938px] bg-[#a9a9a9]" />
            </div>
            <Frame place="top-0 right-0 left-0 h-[831px]" />
            <Frame place="right-0 bottom-0 left-1.5 h-[12px]" />
          </div>
          <aside className="relative ml-1.5 grow bg-[#f0f0f0]">
            <Frame place="-top-[3px] right-0.5 bottom-0 left-0" />
            <div className="absolute right-2 bottom-[28px] flex h-[43px] w-[46px] items-center justify-end">
              <button type="button" aria-label="View controller" className="flex h-[30px] w-[30px] translate-x-px items-center justify-center rounded-full bg-[#9cc6ea]">
                <svg viewBox="0 0 18 16" width={18} height={16} stroke="#fff" strokeWidth={2.600} strokeLinecap="round" aria-hidden="true">
                  <path d="M2 2.500h.1M2 8h.1M2 13.500h.1M7 2.500h9M7 8h5.500M7 13.500h9" />
                </svg>
              </button>
              <Frame place="inset-0" />
            </div>
          </aside>
        </main>
      </div>

      <Arrows />
      <Note place="top-[41px] left-[1045px]">Tool Bar</Note>
      <Note place="top-[120px] left-[32px]">Rerence Track</Note>
      <Note place="top-[300px] left-[360px]">View Space</Note>
      <Note place="top-[835px] left-[338px]">Horizontal Scrollbar</Note>
      <Note place="top-[245px] left-[1273px]">Blank Space</Note>
      <Note place="top-[715px] left-[1275px] text-center">View<br />Controller</Note>
      <Note place="top-[383px] left-[26px] rotate-180 [writing-mode:vertical-rl]">Navigation Bar</Note>
    </div>
  );
}
